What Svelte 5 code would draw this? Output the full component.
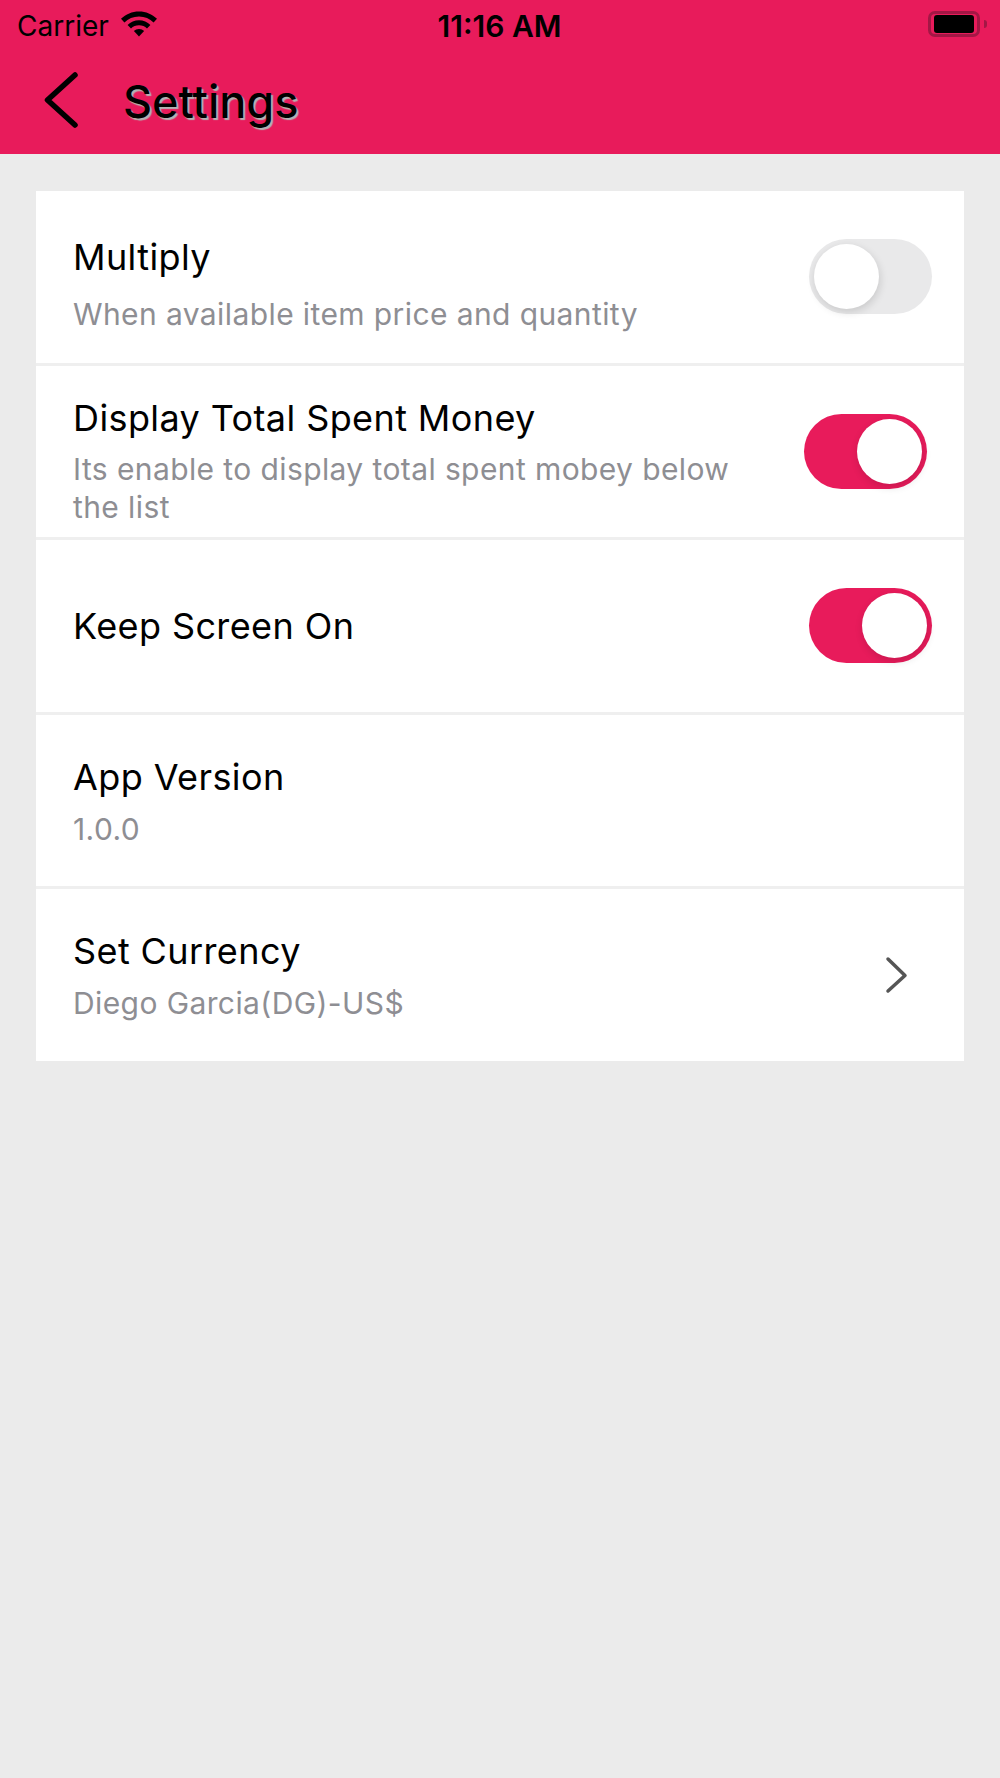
<script>
  const rows = [
    { title: "Multiply", sub: "When available item price and quantity", toggle: false, kind: "first" },
    { title: "Display Total Spent Money", sub: "Its enable to display total spent mobey below the list", toggle: true, kind: "tight" },
    { title: "Keep Screen On", toggle: true },
    { title: "App Version", sub: "1.0.0" },
    { title: "Set Currency", sub: "Diego Garcia(DG)-US$", chevron: true }
  ];
</script>

<div class="page">
  <header class="header">
    <div class="status">
      <div class="status-left">
        <span class="carrier">Carrier</span>
        <svg class="wifi" width="38" height="28" viewBox="0 0 38 28">
          <path d="M19 1.5C12 1.5 5.900 4.200 1 8.800L4.400 12.400C8.200 8.800 13.300 6.600 19 6.600S29.800 8.800 33.600 12.400L37 8.800C32.100 4.200 26 1.500 19 1.500Z" fill="#000"/>
          <path d="M19 10.300C14.600 10.300 10.600 12 7.600 14.900L11 18.400C13.100 16.400 15.900 15.200 19 15.200S24.900 16.400 27 18.400L30.400 14.900C27.400 12 23.400 10.300 19 10.300Z" fill="#000"/>
          <path d="M19 19C17 19 15.200 19.800 13.900 21L19 26.500L24.100 21C22.800 19.800 21 19 19 19Z" fill="#000"/>
        </svg>
      </div>
      <span class="time">11:16 AM</span>
      <div class="battery">
        <div class="battery-body"><div class="battery-fill"></div></div>
        <div class="battery-nub"></div>
      </div>
    </div>
    <div class="bar">
      <svg class="back" width="36" height="60" viewBox="0 0 36 60">
        <path d="M32 5L4.500 30L32 55" fill="none" stroke="#000" stroke-width="5.500" stroke-linecap="round" stroke-linejoin="round"/>
      </svg>
      <h1>Settings</h1>
    </div>
  </header>

  <main class="list">
    {#each rows as row}
      <div class="row {row.kind ?? ''}">
        <div class="text">
          <div class="title">{row.title}</div>
          {#if row.sub}
            <div class="sub">{row.sub}</div>
          {/if}
        </div>
        {#if row.toggle !== undefined}
          <div class="switch" class:on={row.toggle}><div class="knob"></div></div>
        {/if}
        {#if row.chevron}
          <svg class="chevron" width="24" height="38" viewBox="0 0 24 38">
            <path d="M3 3L20 19.500L3 35" fill="none" stroke="#555" stroke-width="3.500" stroke-linecap="round" stroke-linejoin="round"/>
          </svg>
        {/if}
      </div>
    {/each}
  </main>
</div>

<style>
  :global(body) { margin: 0; background: #ebebeb; }
  .page {
    width: 1000px;
    height: 1778px;
    background: #ebebeb;
    font-family: Inter, "Liberation Sans", sans-serif;
    color: #000;
  }
  .header { background: #e81b5b; height: 154px; }
  .status {
    height: 52px;
    display: grid;
    grid-template-columns: 1fr auto 1fr;
    align-items: center;
    padding: 0 13px 0 17px;
  }
  .status-left { display: flex; align-items: center; gap: 11px; }
  .carrier { font-size: 28px; }
  .wifi { margin-top: -5px; }
  .time { font-size: 30px; font-weight: 600; margin-right: 5px; }
  .battery { justify-self: end; display: flex; align-items: center; gap: 4px; margin-top: -4px; }
  .battery-body {
    width: 40px;
    height: 18px;
    padding: 1px 3px;
    border: 3px solid #a31745;
    border-radius: 7px;
  }
  .battery-fill { width: 100%; height: 100%; background: #000; border-radius: 3px; }
  .battery-nub { width: 3px; height: 8px; background: #a31745; border-radius: 0 4px 4px 0; }
  .bar { display: flex; align-items: center; height: 102px; padding-left: 43px; }
  .back { margin-top: -6px; }
  h1 {
    margin: -4px 0 0 44px;
    font-size: 45px;
    font-weight: 500;
    text-shadow: 2px 2px 1px #b4b4b4;
  }
  .list { margin: 37px 36px 0; display: flex; flex-direction: column; }
  .row {
    height: 171.5px;
    background: #fff;
    border-bottom: 3px solid #efefef;
    display: flex;
    align-items: center;
    justify-content: space-between;
    padding: 0 32px 0 37px;
  }
  .row:last-child { border-bottom: 0; }
  .text { width: 680px; }
  .title { font-size: 36px; line-height: 48px; letter-spacing: 0.4px; }
  .sub { font-size: 30px; line-height: 38px; letter-spacing: 0.4px; color: #8e8e93; margin-top: 9px; }
  .first .text { padding-top: 12px; }
  .first .sub { margin-top: 14px; }
  .tight { padding-right: 37px; }
  .tight .text { padding-top: 18px; }
  .tight .sub { margin-top: 8px; }
  .switch {
    width: 123px;
    height: 75px;
    border-radius: 38px;
    background: #e9e9ea;
    box-sizing: border-box;
    padding: 5px;
    display: flex;
    justify-content: flex-start;
    flex-shrink: 0;
  }
  .switch.on { background: #e81b5b; justify-content: flex-end; }
  .knob {
    width: 65px;
    height: 65px;
    border-radius: 50%;
    background: #fff;
    box-shadow: 1px 3px 8px rgba(0, 0, 0, 0.14);
  }
  .chevron { margin-right: 23px; }
</style>
